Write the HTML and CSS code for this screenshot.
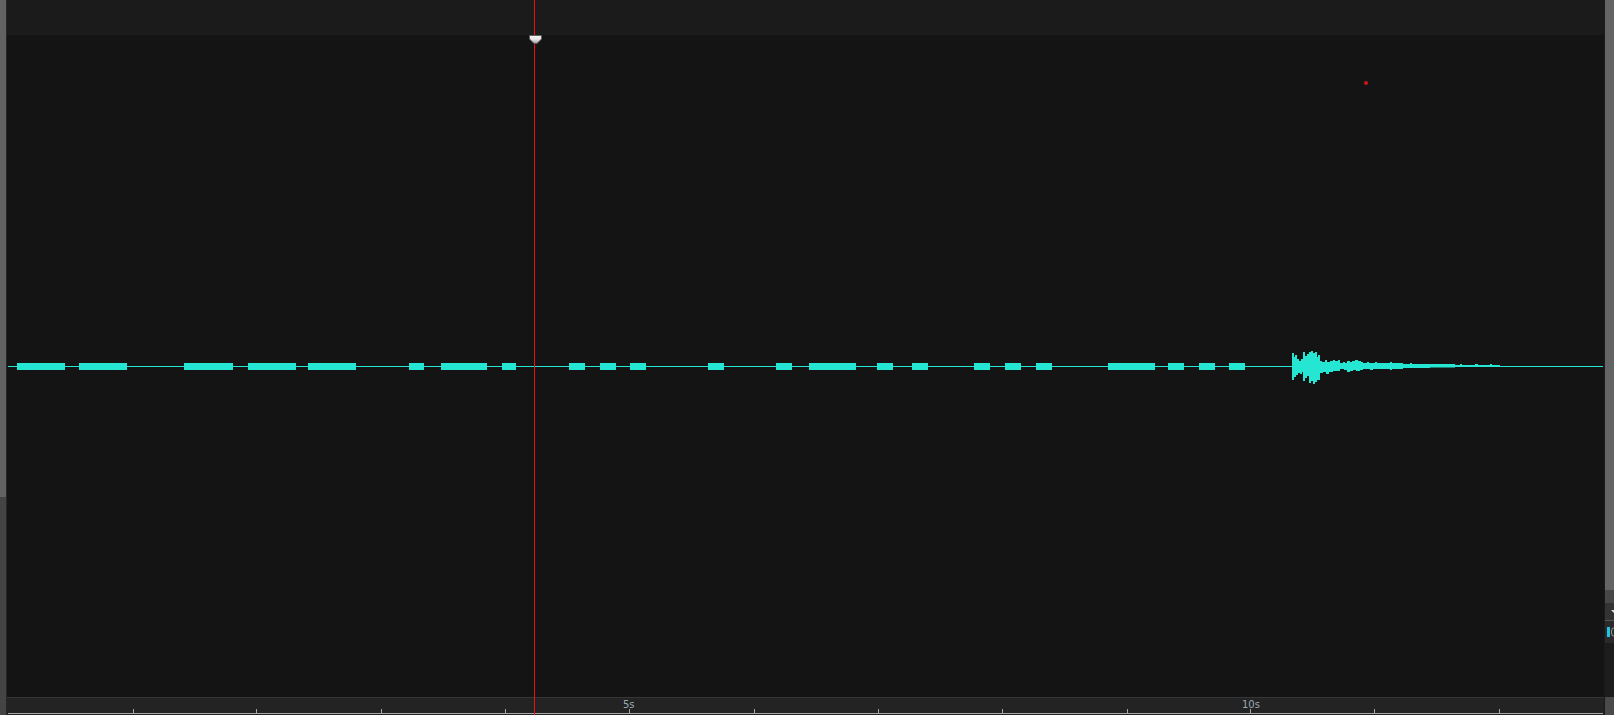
FILE: index.html
```html
<!DOCTYPE html>
<html>
<head>
<meta charset="utf-8">
<title>Waveform</title>
<link rel="stylesheet" href="styles.css">
</head>
<body>
<div class="app">
  <div class="vscroll vscroll-left">
    <div class="thumb-left"></div>
    <div class="track-left"></div>
  </div>
  <div class="main">
    <div class="topbar"></div>
    <div class="canvas">
      <svg class="wave" width="1597" height="662" viewBox="7 35 1597 662">
        <rect x="8" y="366" width="1595" height="1" fill="#24e6d2"/>
        <g fill="#24e6d2">
          <rect x="17" y="363" width="48" height="7"/>
          <rect x="79" y="363" width="48" height="7"/>
          <rect x="184" y="363" width="49" height="7"/>
          <rect x="248" y="363" width="48" height="7"/>
          <rect x="308" y="363" width="48" height="7"/>
          <rect x="409" y="363" width="15" height="7"/>
          <rect x="441" y="363" width="46" height="7"/>
          <rect x="502" y="363" width="14" height="7"/>
          <rect x="569" y="363" width="16" height="7"/>
          <rect x="600" y="363" width="16" height="7"/>
          <rect x="630" y="363" width="16" height="7"/>
          <rect x="708" y="363" width="16" height="7"/>
          <rect x="776" y="363" width="16" height="7"/>
          <rect x="809" y="363" width="47" height="7"/>
          <rect x="877" y="363" width="16" height="7"/>
          <rect x="912" y="363" width="16" height="7"/>
          <rect x="974" y="363" width="16" height="7"/>
          <rect x="1005" y="363" width="16" height="7"/>
          <rect x="1036" y="363" width="16" height="7"/>
          <rect x="1108" y="363" width="47" height="7"/>
          <rect x="1168" y="363" width="16" height="7"/>
          <rect x="1199" y="363" width="16" height="7"/>
          <rect x="1229" y="363" width="16" height="7"/>
          <path d="M1292,366 V353 H1294 V357 H1295 V355 H1297 V359 H1299 V361 H1301 V359 H1303 V352 H1305 V356 H1307 V354 H1309 V352 H1311 V351 H1313 V353 H1315 V352 H1317 V357 H1318 V355 H1320 V361 H1322 V362 H1325 V360 H1327 V362 H1330 V361 H1333 V360 H1335 V361 H1338 V360 H1340 V363 H1343 V362 H1345 V363 H1347 V361 H1350 V362 H1352 V361 H1355 V360 H1358 V361 H1361 V362 H1363 V363 H1367 V362 H1369 V363 H1375 V362 H1377 V363 H1390 V362 H1392 V363 H1403 V364 H1410 V363 H1412 V364 H1455 V365 H1460 V364 H1462 V365 H1475 V364 H1478 V365 H1490 V364 H1492 V365 H1500 V367 H1455 V367.5 H1430 V368 H1403 V369 H1392 V370 H1390 V369 H1373 V370 H1370 V369 H1363 V370 H1360 V371 H1356 V370 H1353 V371 H1350 V372 H1347 V370 H1344 V369 H1340 V371 H1333 V372 H1329 V374 H1326 V372 H1323 V373 H1320 V380 H1317 V382 H1315 V384 H1313 V381 H1311 V383 H1309 V376 H1307 V378 H1305 V381 H1303 V372 H1302 V374 H1300 V373 H1298 V375 H1296 V377 H1294 V380 H1292 Z"/>
        </g>
        <circle cx="1366" cy="83" r="2" fill="#d01515"/>
      </svg>
    </div>
    <div class="ruler">
      <svg class="ticks" width="1597" height="17" viewBox="7 698 1597 17">
        <g fill="#a8a8a8">
          <rect x="8" y="713" width="1595" height="1"/>
          <rect x="133" y="709" width="1" height="4"/>
          <rect x="256" y="709" width="1" height="4"/>
          <rect x="381" y="709" width="1" height="4"/>
          <rect x="505" y="709" width="1" height="4"/>
          <rect x="629" y="709" width="1" height="4"/>
          <rect x="754" y="709" width="1" height="4"/>
          <rect x="878" y="709" width="1" height="4"/>
          <rect x="1002" y="709" width="1" height="4"/>
          <rect x="1127" y="709" width="1" height="4"/>
          <rect x="1250" y="709" width="1" height="4"/>
          <rect x="1374" y="709" width="1" height="4"/>
          <rect x="1499" y="709" width="1" height="4"/>
        </g>
      </svg>
      <span class="tick-label" style="left:623px">5s</span>
      <span class="tick-label" style="left:1242px">10s</span>
    </div>
    <div class="playhead"></div>
    <svg class="marker" width="13" height="9" viewBox="0 0 13 9">
      <defs>
        <linearGradient id="mk" x1="0" y1="0" x2="0" y2="1">
          <stop offset="0" stop-color="#f4f4f4"/>
          <stop offset="0.5" stop-color="#e6e2e2"/>
          <stop offset="1" stop-color="#a09a9a"/>
        </linearGradient>
      </defs>
      <path d="M0.5,0.5 H12.5 V4 L8,8.5 H5 L0.5,4 Z" fill="url(#mk)" stroke="#5e5e5e" stroke-width="1" stroke-linejoin="miter"/>
    </svg>
  </div>
  <div class="vscroll vscroll-right">
    <div class="thumb-right"></div>
    <div class="track-right"></div>
    <div class="mini-btn"><span class="mini-arrow"></span></div>
    <div class="mini-box"><span class="cursor-mark"></span><span class="mini-ring"></span></div>
    <div class="mini-rest"></div>
    <div class="mini-foot"></div>
  </div>
</div>
</body>
</html>
```
FILE: styles.css
```css
html, body {
  margin: 0;
  padding: 0;
  background: #141414;
  overflow: hidden;
}

.app {
  display: flex;
  width: 1614px;
  height: 715px;
  font-family: "DejaVu Sans", "Liberation Sans", sans-serif;
}

.vscroll {
  display: flex;
  flex-direction: column;
  flex: none;
}

.vscroll-left {
  width: 6px;
  border-right: 1px solid #262626;
}

.thumb-left {
  height: 497px;
  background: #626262;
}

.track-left {
  flex: 1;
  background: #444444;
}

.main {
  position: relative;
  flex: none;
  width: 1597px;
  display: flex;
  flex-direction: column;
  background: #141414;
}

.topbar {
  height: 35px;
  background: #1b1b1b;
  flex: none;
}

.canvas {
  flex: 1;
  background: #141414;
}

.wave {
  display: block;
}

.ruler {
  position: relative;
  height: 17px;
  flex: none;
  border-top: 1px solid #363636;
  background: #232323;
}

.ticks {
  display: block;
}

.tick-label {
  position: absolute;
  top: 1px;
  font-size: 10px;
  line-height: 11px;
  color: #9aaab3;
  margin-left: -7px;
}

.playhead {
  position: absolute;
  left: 527px;
  top: 0;
  bottom: 0;
  width: 1px;
  background: #e81212;
}

.marker {
  position: absolute;
  left: 522px;
  top: 35px;
  display: block;
}

.vscroll-right {
  width: 9px;
  border-left: 1px solid #1a1a1a;
}

.thumb-right {
  height: 590px;
  background: #646464;
}

.track-right {
  height: 13px;
  background: #474747;
}

.mini-btn {
  height: 17px;
  background: #333333;
  display: flex;
  align-items: center;
  justify-content: flex-end;
}

.mini-arrow {
  width: 0;
  height: 0;
  border-left: 3px solid transparent;
  border-right: 0 solid transparent;
  border-top: 3px solid #e0e0e0;
}

.mini-box {
  height: 22px;
  border-top: 1px solid #555555;
  background: #2a2a2a;
  display: flex;
  align-items: center;
  gap: 1px;
  overflow: hidden;
  padding-left: 3px;
}

.cursor-mark {
  flex: none;
  width: 2px;
  height: 10px;
  background: #21c4e0;
  box-shadow: -1px 0 0 #21c4e0;
}

.mini-ring {
  flex: none;
  width: 6px;
  height: 8px;
  border: 1px solid #9a9a9a;
  border-radius: 4px;
}

.mini-rest {
  flex: 1;
  background: #1c1c1c;
}

.mini-foot {
  height: 18px;
  background: #4a4a4a;
}
```
